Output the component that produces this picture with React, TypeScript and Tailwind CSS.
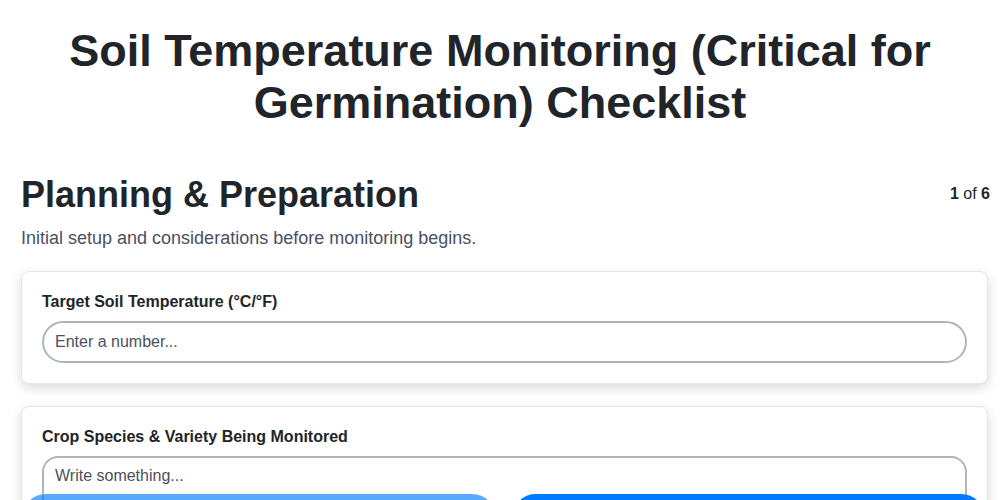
const fontStack = { fontFamily: '"Liberation Sans", Arial, sans-serif' };

interface FieldCardProps {
  label: string;
  children: React.ReactNode;
}

const FieldCard = ({ label, children }: FieldCardProps) => {
  return (
    <div className="rounded-lg border border-[#e5e7eb] bg-white px-[20px] pt-[20px] pb-[20px] shadow-[0_4px_12px_rgba(0,0,0,0.15)]">
      <label className="mb-[9px] block text-[16px] font-bold leading-[20px] text-[#212529]">
        {label}
      </label>
      {children}
    </div>
  );
};

const App = () => {
  return (
    <div className="min-h-screen bg-white text-[#212529]" style={fontStack}>
      {/* Title */}
      <h1 className="px-[21px] pt-[25px] text-center text-[45px] font-bold leading-[52px] text-[#212529]">
        Soil Temperature Monitoring (Critical for Germination) Checklist
      </h1>

      <div className="pl-[21px] pr-[10px] pb-24">
        {/* Section header */}
        <div className="mt-[44px] flex items-start justify-between">
          <h2 className="text-[36px] font-bold leading-[44px] text-[#212529]">
            Planning &amp; Preparation
          </h2>
          <span className="pt-[9px] text-[16px] text-[#212529]">
            <b>1</b> of <b>6</b>
          </span>
        </div>
        <p className="mt-[9px] text-[18px] leading-[24px] text-[#4a5060]">
          Initial setup and considerations before monitoring begins.
        </p>

        {/* Fields */}
        <div className="mt-[21px] mr-[2px] flex flex-col gap-[22px]">
          <FieldCard label="Target Soil Temperature (°C/°F)">
            <input
              type="text"
              placeholder="Enter a number..."
              className="h-[42px] w-full rounded-full border-2 border-[#adb5bd] bg-white px-[11px] text-[16px] text-[#212529] outline-none placeholder:text-[#4a5060]"
            />
          </FieldCard>
          <FieldCard label="Crop Species & Variety Being Monitored">
            <textarea
              placeholder="Write something..."
              rows={4}
              className="block w-full resize-none rounded-2xl border-2 border-[#adb5bd] bg-white px-[11px] py-[6px] text-[16px] leading-[24px] text-[#212529] outline-none placeholder:text-[#4a5060]"
            />
          </FieldCard>
        </div>
      </div>

      {/* Footer nav */}
      <div className="fixed top-[494px] left-[22px] right-[15px] flex gap-4">
        <button className="h-12 flex-1 rounded-full bg-[#007bff] text-[16px] font-bold text-white opacity-65">
          Previous
        </button>
        <button className="h-12 flex-1 rounded-full bg-[#007bff] text-[16px] font-bold text-white">
          Next
        </button>
      </div>
    </div>
  );
};

export default App;
